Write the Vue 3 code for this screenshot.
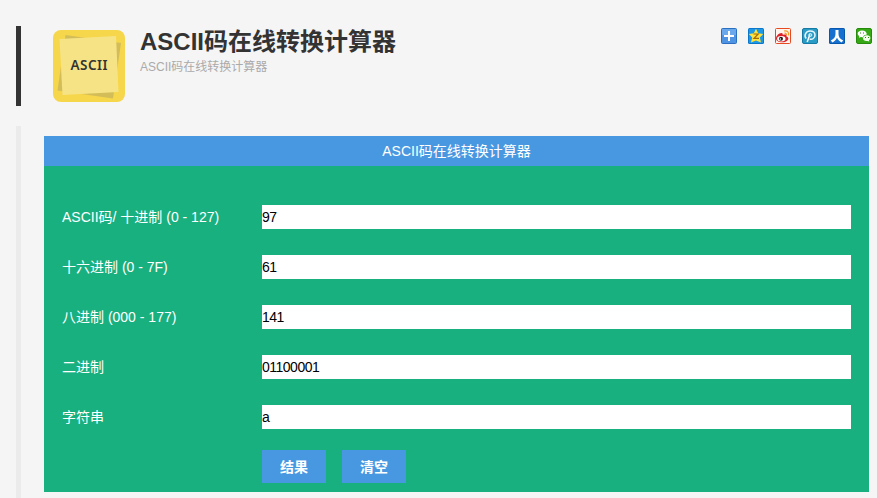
<script setup>
import { ref } from 'vue'

const rows = ref([
  { label: 'ASCII码/ 十进制 (0 - 127)', value: '97' },
  { label: '十六进制 (0 - 7F)', value: '61' },
  { label: '八进制 (000 - 177)', value: '141' },
  { label: '二进制', value: '01100001' },
  { label: '字符串', value: 'a' },
])

function convert() {
  const n = parseInt(rows.value[0].value, 10)
  if (Number.isNaN(n)) return
  rows.value[1].value = n.toString(16).toUpperCase()
  rows.value[2].value = n.toString(8)
  rows.value[3].value = n.toString(2).padStart(8, '0')
  rows.value[4].value = String.fromCharCode(n)
}

function clear() {
  rows.value.forEach((row) => { row.value = '' })
}
</script>

<template>
  <div class="page">
    <header class="head">
      <svg class="logo" viewBox="0 0 72 72">
        <rect width="72" height="72" rx="8" fill="#f6d64a" />
        <path d="M12.500 5 68 13 60 68.500 4.500 60.500Z" fill="#d3bd58" />
        <path d="M6.500 9 63 6 65.500 62 9.500 65Z" fill="#f6e386" />
        <text x="36" y="40" text-anchor="middle" textLength="37" class="logo-text">ASCII</text>
      </svg>
      <div class="titles">
        <h1>ASCII码在线转换计算器</h1>
        <p>ASCII码在线转换计算器</p>
      </div>
      <div class="share">
        <svg viewBox="0 0 16 16">
          <rect x=".5" y=".5" width="15" height="15" rx="1" fill="#4f94e2" stroke="#2b6fc0" />
          <path d="M1 1h14v6H1z" fill="#6aa8ec" />
          <path d="M7 3h2v4h4v2H9v4H7V9H3V7h4z" fill="#fff" />
        </svg>
        <svg viewBox="0 0 16 16">
          <rect width="16" height="16" rx="1.500" fill="#0c76cb" />
          <rect x="1" y="1" width="14" height="14" fill="#1c98e6" />
          <path d="M8 .8 10.200 5.200 15.200 6 11.800 9.500 13 14.500 8 12.600 3 14.500 4.200 9.500.8 6 5.800 5.200Z" fill="#ffe23c" />
          <path d="M5.500 6h4.700L6 10.300h5" fill="none" stroke="#a86a08" stroke-width="1.200" />
        </svg>
        <svg viewBox="0 0 16 16">
          <rect x=".5" y=".5" width="15" height="15" rx="1" fill="#fff4ed" stroke="#e64a22" />
          <path d="M1 10.500C1 8 4 5 6.500 5c1.300 0 1.500 1 1.200 2C10 6 12 6.500 11.500 8.500c3 1 2 3.800-.5 5-4 1.900-10 .5-10-3Z" fill="#dc2127" />
          <ellipse cx="6.300" cy="10.700" rx="4.200" ry="2.700" fill="#fff" />
          <circle cx="6" cy="10.700" r="2" fill="#251b1b" />
          <circle cx="5.400" cy="11" r=".7" fill="#fff" />
          <path d="M9 3c3.500-.8 5.300 1.500 4.500 4.500M9.500 5.200c1.500-.2 2.200.7 1.900 2" fill="none" stroke="#f49a22" stroke-width="1.200" />
        </svg>
        <svg viewBox="0 0 16 16">
          <rect x=".5" y=".5" width="15" height="15" rx="1.500" fill="#299bc5" stroke="#157aa4" />
          <path d="M4.200 10.500C1.500 7.500 4 3 8 3c3 0 5 1.700 5 4.200 0 2.800-2.700 4.700-5.300 3.800" fill="none" stroke="#e5f6fc" stroke-width="1.500" />
          <path d="M5.200 14 8 6.200" stroke="#fff" stroke-width="1.500" />
          <circle cx="8.300" cy="7" r="1.500" fill="none" stroke="#d7f1fa" />
        </svg>
        <svg viewBox="0 0 16 16">
          <rect width="16" height="16" rx="1.500" fill="#0757ad" />
          <rect x="1" y="1" width="14" height="14" fill="#1570cf" />
          <path d="M6.500 2h3v4c0 3 1.700 5.200 4.700 6.500L12.500 14.500C10.500 13.500 9 12 8 9.800 7 12 5.500 13.500 3.500 14.500L1.800 12.500C4.800 11.200 6.500 9 6.500 6Z" fill="#fff" />
        </svg>
        <svg viewBox="0 0 16 16">
          <rect x=".5" y=".5" width="15" height="15" rx="1.500" fill="#36a816" stroke="#268b0b" />
          <path d="M3 9.700 3.300 8.200C-.2 5.500 2.500 2.500 6 2.500c3 0 5 1.800 4.700 4C8 7 7 8 7.200 9.500L5 9Z" fill="#fff" />
          <path d="M13.200 13.500 13 12.200c2.800-2 1-5-2-5-2.500 0-4 1.500-4 3 0 2 2.200 3.200 4.400 2.700Z" fill="#f2ffed" />
          <path d="M4 4.500h1v1H4zM7 4.500h1v1H7zM9 9h1v1H9zM12 9h1v1h-1z" fill="#278b0b" />
        </svg>
      </div>
    </header>

    <main class="content">
      <section class="panel">
        <h2>ASCII码在线转换计算器</h2>
        <form class="form" @submit.prevent="convert">
          <label v-for="row in rows" :key="row.label" class="row">
            <span>{{ row.label }}</span>
            <input v-model="row.value" type="text">
          </label>
          <div class="actions">
            <button type="submit">结果</button>
            <button type="button" @click="clear">清空</button>
          </div>
        </form>
      </section>
    </main>
  </div>
</template>

<style>
body {
  background: #f5f5f5;
}
</style>

<style scoped>
.page {
  box-sizing: border-box;
  height: 498px;
  padding: 26px 0 0 16px;
  overflow: hidden;
  display: flex;
  flex-direction: column;
  gap: 20px;
  background: #f5f5f5;
  font-family: "Liberation Sans", "Noto Sans CJK SC", sans-serif;
  color: #333;
}
.head {
  box-sizing: border-box;
  flex: none;
  height: 80px;
  border-left: 5px solid #333;
  padding: 0 5px 0 32px;
  display: flex;
  align-items: flex-start;
}
.logo {
  width: 72px;
  height: 72px;
  margin-top: 4px;
}
.logo-text {
  font: 600 13.5px "Noto Sans", sans-serif;
  fill: #333;
}
.titles {
  margin-left: 15px;
  padding-top: 1px;
  flex: 1;
}
h1 {
  margin: 0;
  font-size: 24px;
  line-height: 30px;
}
p {
  margin: 0;
  padding-top: 1px;
  font-size: 12px;
  line-height: 18px;
  color: #aaa;
}
.share {
  display: flex;
  gap: 11px;
  padding-top: 2px;
}
.share svg {
  width: 16px;
  height: 16px;
}
.content {
  flex: 1;
  border-left: 5px solid #ebebeb;
  padding: 10px 8px 0 23px;
}
.panel {
  height: 356px;
  background: #19b080;
}
h2 {
  margin: 0;
  height: 30px;
  background: #4898e1;
  color: #fff;
  font-size: 14px;
  font-weight: normal;
  line-height: 30px;
  text-align: center;
}
.form {
  padding: 26px 18px 0;
}
.row {
  display: flex;
  align-items: center;
  height: 50px;
  color: #fff;
  font-size: 14px;
}
.row span {
  width: 200px;
  padding-bottom: 2px;
}
input {
  box-sizing: border-box;
  flex: 1;
  height: 24px;
  border: 0;
  padding: 0 0 1px;
  background: #fff;
  color: #000;
  font-family: inherit;
  font-size: 14px;
  letter-spacing: -0.5px;
}
.actions {
  display: flex;
  gap: 16px;
  padding: 8px 0 0 200px;
}
button {
  width: 64px;
  height: 33px;
  border: 0;
  padding: 0 0 1px;
  background: #4898e1;
  color: #fff;
  font-family: inherit;
  font-size: 14px;
  font-weight: bold;
}
</style>
